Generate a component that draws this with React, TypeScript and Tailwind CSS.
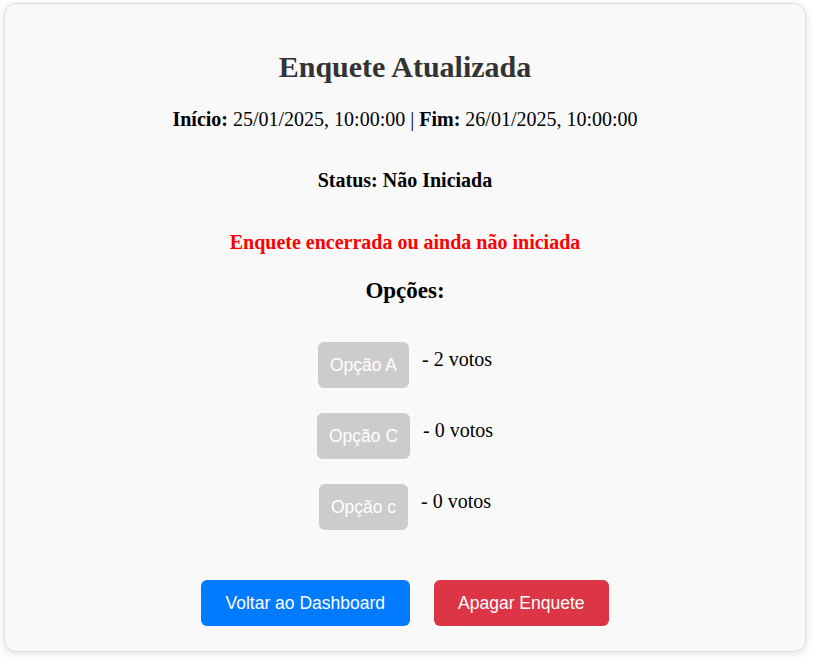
import React from 'react'

const opcoes = [
  { texto: 'Opção A', votos: 2 },
  { texto: 'Opção C', votos: 0 },
  { texto: 'Opção c', votos: 0 },
]

const App = () => {
  return (
    <div className="min-h-screen bg-white pt-[3px] pl-[4px] font-['Liberation_Serif',serif]">
      <div className="w-[802px] h-[649px] bg-[#f9f9f9] border border-[#dddddd] rounded-[12px] shadow-[0_2px_8px_rgba(0,0,0,0.12)] pt-[45px] flex flex-col items-center text-black">
        <h1 className="text-[30px] leading-[35px] font-bold text-[#333333]">Enquete Atualizada</h1>

        <p className="mt-[24px] text-[20px] leading-[23px]">
          <strong>Início:</strong> 25/01/2025, 10:00:00 | <strong>Fim:</strong> 26/01/2025, 10:00:00
        </p>

        <p className="mt-[38px] text-[20px] leading-[23px] font-bold">Status: Não Iniciada</p>

        <p className="mt-[39px] text-[20px] leading-[23px] font-bold text-[#ff0000]">
          Enquete encerrada ou ainda não iniciada
        </p>

        <h3 className="mt-[24px] text-[23px] leading-[26px] font-bold">Opções:</h3>

        {/* Opções */}
        <ul className="mt-[38px] flex flex-col gap-[25px]">
          {opcoes.map((op, idx) => (
            <li key={idx} className="flex items-start justify-center gap-[13px]">
              <button
                disabled
                className="h-[46px] px-[12px] rounded-[6px] bg-[#cccccc] text-white text-[17.5px] font-['Liberation_Sans',sans-serif]"
              >
                {op.texto}
              </button>
              <span className="mt-[6px] text-[20px] leading-[23px]">- {op.votos} votos</span>
            </li>
          ))}
        </ul>

        {/* Botões */}
        <div className="mt-[50px] flex gap-[24px]">
          <button className="h-[46px] px-[24.5px] rounded-[6px] bg-[#007bff] text-white text-[17.5px] font-['Liberation_Sans',sans-serif]">
            Voltar ao Dashboard
          </button>
          <button className="h-[46px] px-[24.5px] rounded-[6px] bg-[#dc3545] text-white text-[17.5px] font-['Liberation_Sans',sans-serif]">
            Apagar Enquete
          </button>
        </div>
      </div>
    </div>
  )
}

export default App
